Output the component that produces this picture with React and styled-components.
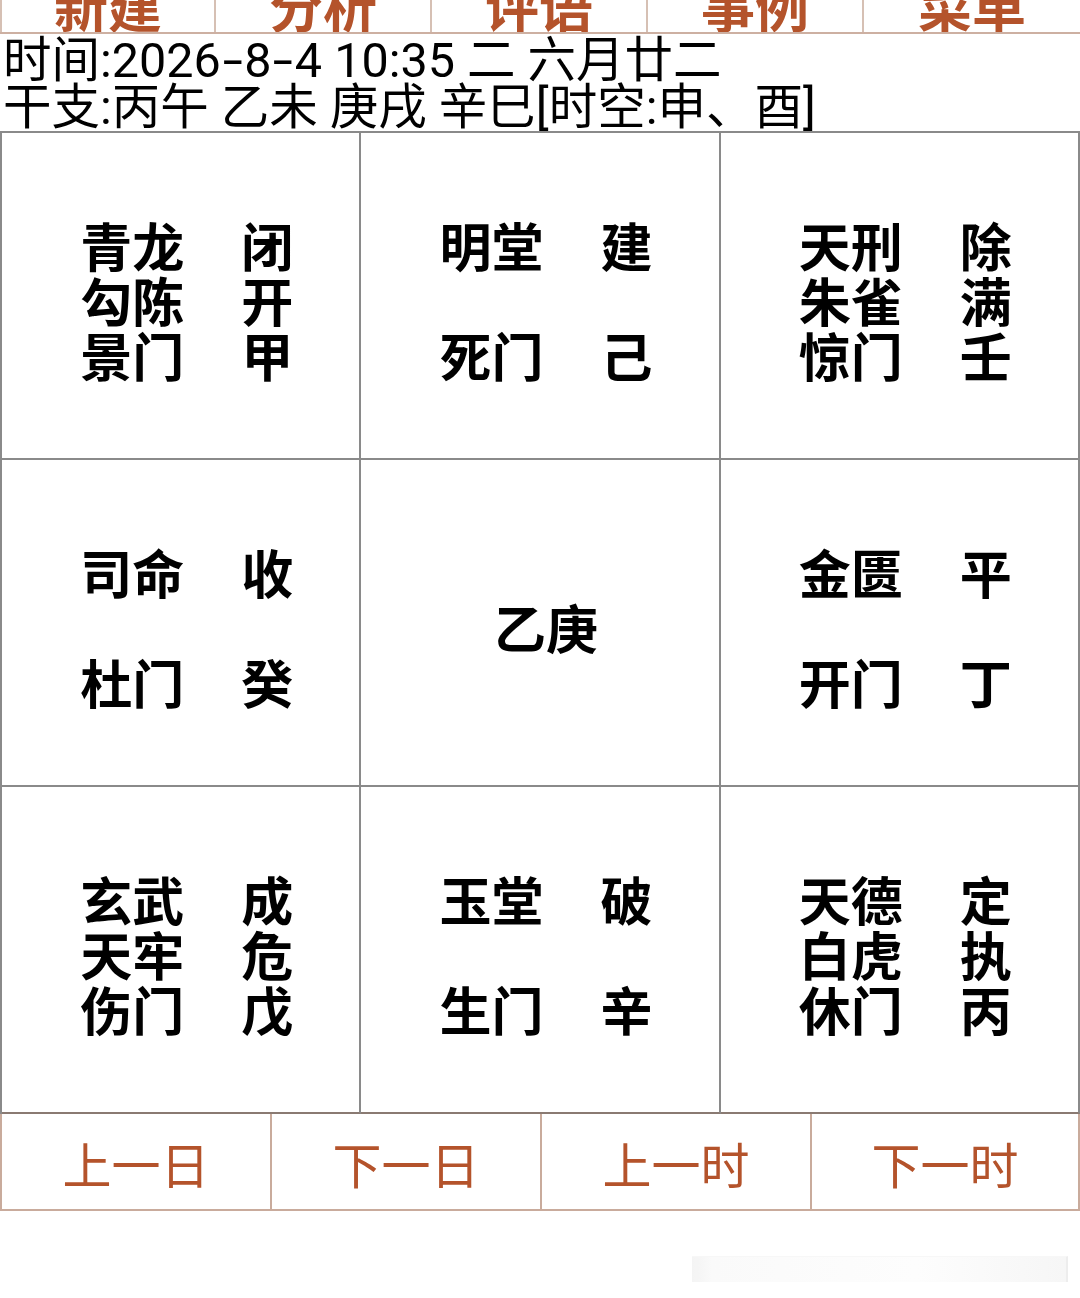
import React from "react";
import styled, { createGlobalStyle } from "styled-components";

const Global = createGlobalStyle`
  html, body { margin: 0; padding: 0; background: #fff; }
  body { width: 1080px; font-family: "Noto Sans CJK SC", "Noto Sans", sans-serif; color: #000; }
  * { box-sizing: border-box; }
`;

const Page = styled.div`
  width: 1080px;
  height: 1298px;
  position: relative;
  overflow: hidden;
  background: #fff;
`;

const TabBar = styled.div`
  display: grid;
  grid-template-columns: repeat(5, 1fr);
  height: 34px;
  border-bottom: 2px solid #cdb0a2;
  overflow: hidden;
`;

const Tab = styled.div`
  height: 32px;
  overflow: hidden;
  text-align: center;
  border-right: ${(p) => (p.$last ? "none" : "2px solid #d6c0b4")};
  border-left: ${(p) => (p.$first ? "2px solid #d6c0b4" : "none")};
`;

const TabLabel = styled.span`
  display: block;
  margin-top: -22px;
  font-size: 54px;
  font-weight: 700;
  line-height: 54px;
  color: #b4532b;
`;

const Info = styled.div`
  padding: 3px 0 0 3px;
  font-family: Roboto, "Noto Sans CJK SC", sans-serif;
  font-size: 48.5px;
  line-height: 47px;
  white-space: nowrap;
`;

const Dash = styled.span`
  display: inline-block;
  transform: scaleX(1.5);
  padding: 0 5px;
`;

const Board = styled.div`
  display: grid;
  grid-template-columns: repeat(3, 1fr);
  grid-template-rows: repeat(3, 327px);
  border-top: 2px solid #8a8a8a;
  border-left: 2px solid #8a8a8a;
  width: 1080px;
`;

const Cell = styled.div`
  border-right: 2px solid #8a8a8a;
  border-bottom: 2px solid ${(p) => (p.$bottom ? "#8a7a72" : "#8a8a8a")};
  display: flex;
  align-items: center;
  justify-content: center;
  padding: 8px 0 0 12px;
`;

const Block = styled.div`
  display: grid;
  grid-template-columns: 104px 52px;
  column-gap: 57px;
  font-size: 52px;
  font-weight: 700;
  line-height: 55px;
  white-space: nowrap;
`;

const Center = styled.div`
  font-size: 52px;
  font-weight: 700;
  line-height: 55px;
  height: 165px;
  display: flex;
  align-items: center;
`;

const Slot = styled.span`
  height: 55px;
  display: block;
`;

const Footer = styled.div`
  display: grid;
  grid-template-columns: repeat(4, 1fr);
  height: 97px;
  border-bottom: 2px solid #c9ab9c;
`;

const FootButton = styled.div`
  display: flex;
  align-items: center;
  justify-content: center;
  padding-top: 2px;
  font-size: 49px;
  line-height: 1;
  color: #b4532b;
  border-left: 2px solid #c9ab9c;
  border-right: ${(p) => (p.$last ? "2px solid #c9ab9c" : "none")};
`;

const ScrollHint = styled.div`
  position: absolute;
  left: 692px;
  top: 1256px;
  width: 376px;
  height: 26px;
  border-right: 2px solid #ececec;
  border-top: 1px solid #f7f7f7;
  background: linear-gradient(to right, #f3f3f3 0px, #fafafa 20px, #fdfdfd 60%, #f6f6f6 100%);
  opacity: 0.9;
`;

const tabs = ["新建", "分析", "评语", "事例", "菜单"];

const cells = [
  [["青龙", "闭"], ["勾陈", "开"], ["景门", "甲"]],
  [["明堂", "建"], null, ["死门", "己"]],
  [["天刑", "除"], ["朱雀", "满"], ["惊门", "壬"]],
  [["司命", "收"], null, ["杜门", "癸"]],
  "乙庚",
  [["金匮", "平"], null, ["开门", "丁"]],
  [["玄武", "成"], ["天牢", "危"], ["伤门", "戊"]],
  [["玉堂", "破"], null, ["生门", "辛"]],
  [["天德", "定"], ["白虎", "执"], ["休门", "丙"]],
];

const buttons = ["上一日", "下一日", "上一时", "下一时"];

export default function App() {
  return (
    <Page>
      <Global />
      <TabBar>
        {tabs.map((t, i) => (
          <Tab key={t} $first={i === 0} $last={i === tabs.length - 1}>
            <TabLabel>{t}</TabLabel>
          </Tab>
        ))}
      </TabBar>
      <Info>
        <div>
          时间:2026<Dash>-</Dash>8<Dash>-</Dash>4 10:35 二 六月廿二
        </div>
        <div>干支:丙午 乙未 庚戌 辛巳[时空:申、酉]</div>
      </Info>
      <Board>
        {cells.map((c, i) => (
          <Cell key={i} $bottom={i >= 6}>
            {typeof c === "string" ? (
              <Center>{c}</Center>
            ) : (
              <Block>
                {c.map((row, j) =>
                  row ? (
                    <React.Fragment key={j}>
                      <Slot>{row[0]}</Slot>
                      <Slot>{row[1]}</Slot>
                    </React.Fragment>
                  ) : (
                    <React.Fragment key={j}>
                      <Slot />
                      <Slot />
                    </React.Fragment>
                  )
                )}
              </Block>
            )}
          </Cell>
        ))}
      </Board>
      <Footer>
        {buttons.map((b, i) => (
          <FootButton key={b} $last={i === buttons.length - 1}>
            {b}
          </FootButton>
        ))}
      </Footer>
      <ScrollHint />
    </Page>
  );
}
